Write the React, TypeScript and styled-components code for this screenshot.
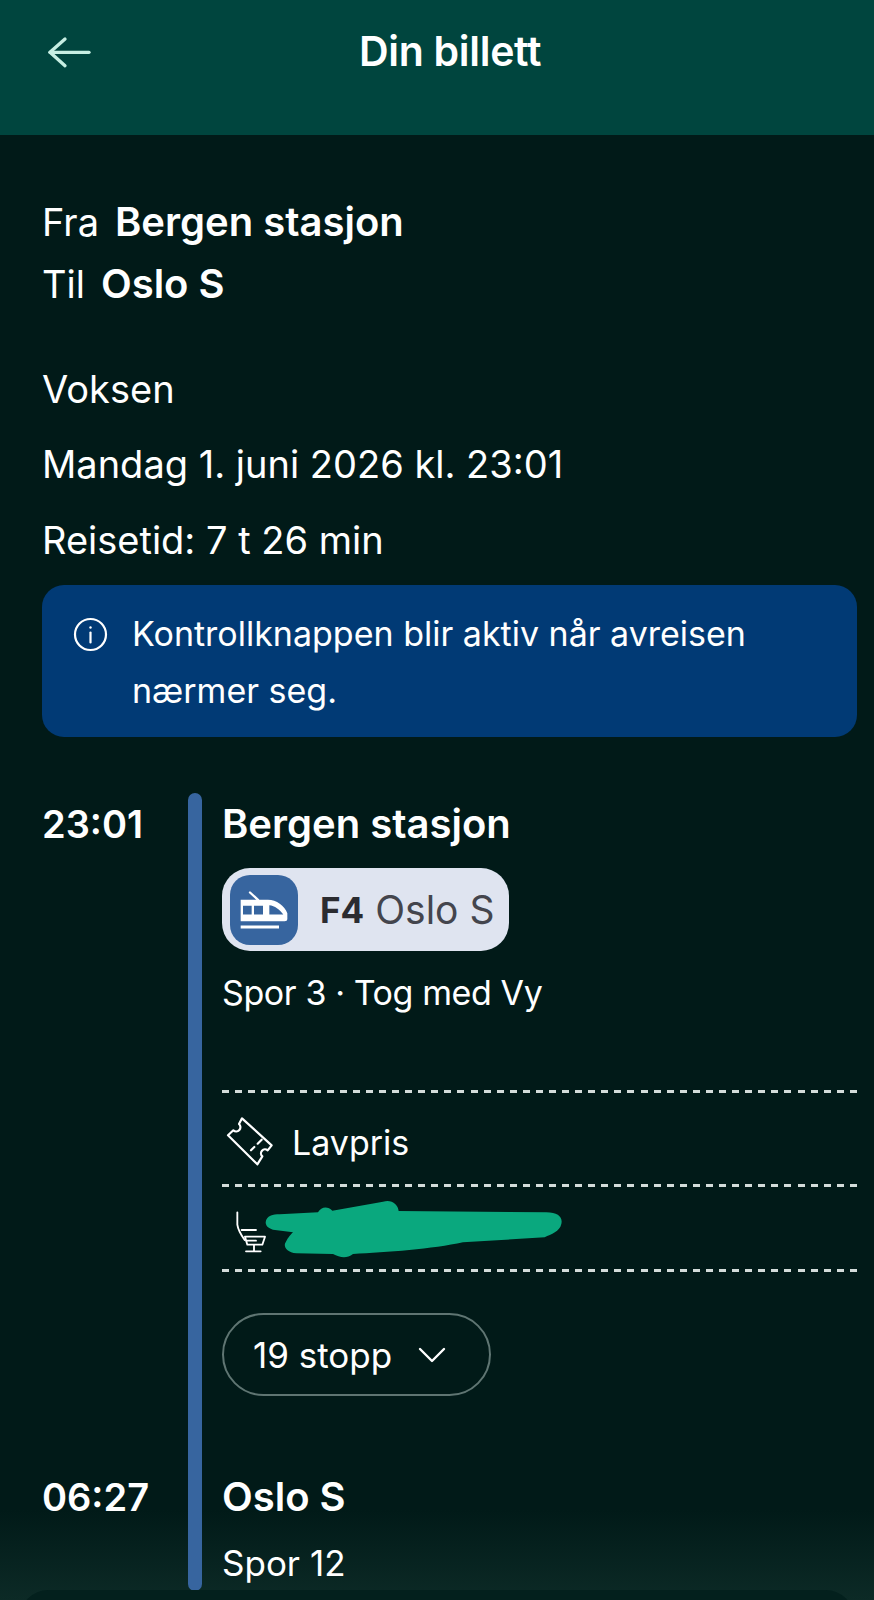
import React from "react";
import styled, { createGlobalStyle } from "styled-components";

const GlobalStyle = createGlobalStyle`
  html, body {
    margin: 0;
    padding: 0;
    background: #011a18;
  }
  * {
    box-sizing: border-box;
  }
`;

const Page = styled.div`
  position: relative;
  width: 874px;
  height: 1600px;
  overflow: hidden;
  background: linear-gradient(to bottom, #011a18 1510px, #0c2a26 1600px);
  color: #fff;
  font-family: Inter, "Noto Sans", sans-serif;
  font-size: 34px;
`;

const Header = styled.header`
  height: 135px;
  background: #00453e;
  display: flex;
  align-items: flex-start;
  padding: 25px 0 0 35px;
`;

const BackButton = styled.div`
  width: 70px;
  height: 60px;
  flex: none;
`;

const Title = styled.h1`
  margin: 0 0 0 254px;
  font-size: 41px;
  font-weight: 600;
  line-height: 52px;
  letter-spacing: -0.3px;
`;

const Summary = styled.section`
  padding: 59px 17px 0 42px;
  font-size: 38px;
`;

const RouteLine = styled.div`
  display: flex;
  gap: 16px;
  height: 62px;
  line-height: 56px;
`;

const Strong = styled.strong`
  font-size: 40px;
  font-weight: 600;
`;

const InfoLine = styled.div<{ $gap: number }>`
  margin-top: ${(p) => p.$gap}px;
  line-height: 48px;
`;

const Notice = styled.div`
  margin-top: 21px;
  height: 152px;
  padding: 20px 22px 0 31px;
  border-radius: 22px;
  background: #013a75;
  display: flex;
  gap: 24px;
  font-size: 34px;
  line-height: 57px;
`;

const NoticeIcon = styled.div`
  width: 35px;
  height: 35px;
  margin-top: 6px;
  flex: none;
`;

const Timeline = styled.section`
  margin-top: 56px;
  padding-left: 42px;
  display: grid;
  grid-template-columns: 146px 14px 1fr;
`;

const Times = styled.div`
  display: flex;
  flex-direction: column;
  justify-content: space-between;
  font-size: 38px;
  font-weight: 600;
  padding: 6px 0 69px;
`;

const Time = styled.div`
  line-height: 50px;
  height: 50px;
`;

const Bar = styled.div`
  width: 14px;
  height: 798px;
  border-radius: 7px;
  background: #37659f;
`;

const Details = styled.div`
  padding-left: 20px;
  padding-right: 17px;
`;

const StationName = styled.div`
  margin-top: 6px;
  line-height: 50px;
  font-size: 40px;
  font-weight: 600;
`;

const LinePill = styled.div`
  margin-top: 19px;
  width: 287px;
  height: 83px;
  border-radius: 28px;
  background: #dfe4f0;
  display: flex;
  align-items: center;
  padding-left: 8px;
`;

const LineIcon = styled.div`
  width: 68px;
  height: 70px;
  flex: none;
  border-radius: 20px;
  background: #37659f;
  display: flex;
  align-items: center;
  justify-content: center;
  margin-right: 22px;
`;

const LineCode = styled.span`
  font-size: 35px;
  font-weight: 700;
  color: #2b2b30;
  margin-right: 11px;
`;

const LineDest = styled.span`
  font-size: 39px;
  color: #44454d;
`;

const Track = styled.div<{ $top: number; $size: number; $tight?: boolean }>`
  margin-top: ${(p) => p.$top}px;
  font-size: ${(p) => p.$size}px;
  letter-spacing: ${(p) => (p.$tight ? "-0.4px" : "0")};
  line-height: 44px;
`;

const Dashed = styled.div<{ $height: number; $top?: number }>`
  position: relative;
  height: ${(p) => p.$height}px;
  margin-top: ${(p) => p.$top ?? 0}px;
  display: flex;
  align-items: center;
  gap: 12px;
  padding-top: ${(p) => (p.$height > 10 ? 10 : 0)}px;
  background-image: repeating-linear-gradient(to right, #d4dcda 0 7px, transparent 7px 13.08px);
  background-size: 100% 3px;
  background-repeat: no-repeat;
`;

const FareIcon = styled.div`
  width: 60px;
  height: 60px;
  margin-left: -2px;
  flex: none;
`;

const SeatIcon = styled.div`
  width: 50px;
  height: 55px;
  margin: 0 0 0 8px;
  flex: none;
`;

const Scribble = styled.svg`
  position: absolute;
  left: 41px;
  top: 15px;
`;

const StopsButton = styled.div`
  margin-top: 41px;
  width: 269px;
  height: 83px;
  border: 2px solid #5f7572;
  border-radius: 42px;
  display: flex;
  align-items: center;
  padding-left: 29px;
  gap: 25px;
  font-size: 35px;
`;

const EndName = styled(StationName)`
  margin-top: 76px;
`;

const BottomSheet = styled.div`
  position: absolute;
  left: 20px;
  right: 20px;
  top: 1590px;
  height: 60px;
  border-radius: 28px 28px 0 0;
  background: #03201d;
`;

export default function App() {
  return (
    <Page>
      <GlobalStyle />
      <Header>
        <BackButton>
          <svg viewBox="0 0 210 180" width="70" height="60" fill="none" stroke="#c6eee2" strokeWidth="10" strokeLinecap="round" strokeLinejoin="round">
            <path d="M90 42 45 82l45 40" />
            <path d="M45 82h117" />
          </svg>
        </BackButton>
        <Title>Din billett</Title>
      </Header>

      <Summary>
        <RouteLine>Fra <Strong>Bergen stasjon</Strong></RouteLine>
        <RouteLine>Til <Strong>Oslo S</Strong></RouteLine>
        <InfoLine $gap={47}>Voksen</InfoLine>
        <InfoLine $gap={27}>Mandag 1. juni 2026 kl. 23:01</InfoLine>
        <InfoLine $gap={28}>Reisetid: 7 t 26 min</InfoLine>
        <Notice>
          <NoticeIcon>
            <svg viewBox="0 0 35 35" width="35" height="35" fill="none" stroke="#fff" strokeWidth="2.2" strokeLinecap="round">
              <circle cx="17.5" cy="17.5" r="15.5" />
              <path d="M17.500 15.500v10" />
              <circle cx="17.5" cy="10.5" r="1.2" fill="#fff" stroke="none" />
            </svg>
          </NoticeIcon>
          <div>Kontrollknappen blir aktiv når avreisen nærmer seg.</div>
        </Notice>
      </Summary>

      <Timeline>
        <Times>
          <Time>23:01</Time>
          <Time>06:27</Time>
        </Times>
        <Bar />
        <Details>
          <StationName>Bergen stasjon</StationName>
          <LinePill>
            <LineIcon>
              <svg viewBox="40 50 156 125" width="52" height="42" fill="#fff">
                <path d="M76 60 100 82" stroke="#fff" strokeWidth="7" strokeLinecap="round" />
                <path fillRule="evenodd" d="M48 82h82c25 0 50 18 58 40v18q0 6-8 6H48zM55 100v26h26v-26zM88 100v26h27v-26zM134 98v28h42c-11-16-26-26-42-28z" />
                <rect x="48" y="159" width="115" height="9" />
              </svg>
            </LineIcon>
            <LineCode>F4</LineCode>
            <LineDest>Oslo S</LineDest>
          </LinePill>
          <Track $top={20} $size={34} $tight>Spor 3 · Tog med Vy</Track>
          <Dashed $height={94} $top={75}>
            <FareIcon>
              <svg viewBox="0 0 180 180" width="60" height="60" fill="none" stroke="#fff" strokeWidth="6.5" strokeLinejoin="round" strokeLinecap="round">
                <path d="M66 19 155 100 143 115A12 12 0 0 0 127 133L112 157 24 70 40 55A12 12 0 0 0 57 36Z" />
                <path d="M125 83 113 95M103 105 93 115" />
              </svg>
            </FareIcon>
            Lavpris
          </Dashed>
          <Dashed $height={85}>
            <SeatIcon>
              <svg viewBox="0 0 150 165" width="50" height="55" fill="none" stroke="#fff" strokeWidth="5.5" strokeLinecap="round" strokeLinejoin="round">
                <path d="M22 25v37c2 16 12 32 22 46" />
                <path d="M35 78h43M45 98h60l-8 24H52zM48 110h30M72 122v20M48 142h44" />
              </svg>
            </SeatIcon>
            <Scribble width="300" height="60" viewBox="250 390 900 180" fill="#0aa87e">
              <path d="M258 460C260 440 280 436 300 436L415 430C425 412 445 412 458 425L610 398C635 390 655 405 657 426L1100 430C1135 430 1150 445 1145 465 1140 488 1115 495 1095 505L850 520C760 540 620 550 520 555 500 570 480 565 460 555L350 553C320 550 310 530 318 520 325 505 335 495 340 490L280 482C265 478 258 470 258 460Z" />
            </Scribble>
          </Dashed>
          <Dashed $height={3} />
          <StopsButton>
            19 stopp
            <svg viewBox="0 0 30 18" width="30" height="18" fill="none" stroke="#fff" strokeWidth="2.4" strokeLinecap="round" strokeLinejoin="round">
              <path d="M3 3l12 12L27 3" />
            </svg>
          </StopsButton>
          <EndName>Oslo S</EndName>
          <Track $top={19} $size={35}>Spor 12</Track>
        </Details>
      </Timeline>

      <BottomSheet />
    </Page>
  );
}
